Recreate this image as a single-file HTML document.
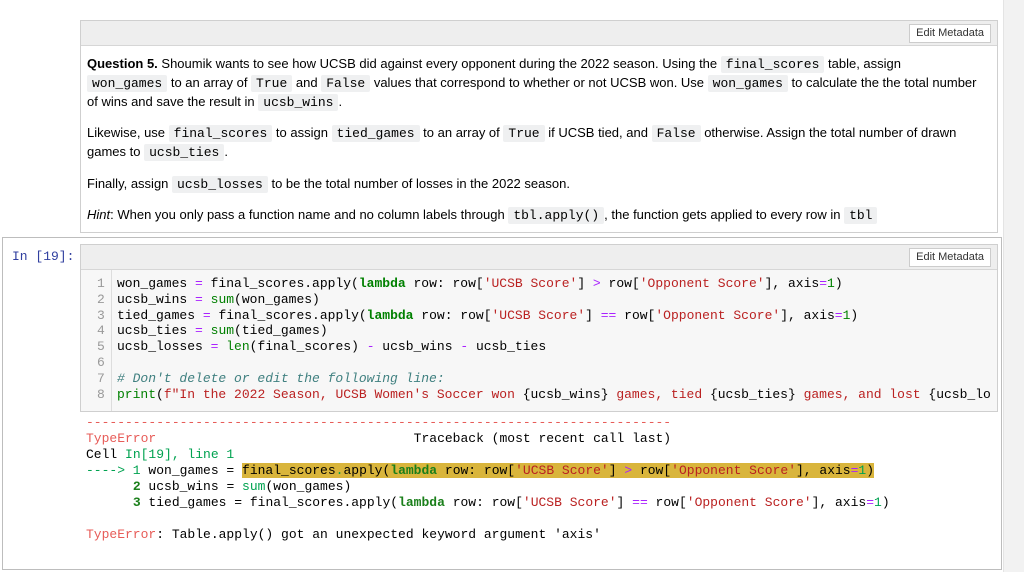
<!DOCTYPE html>
<html><head><style>
body{margin:0;width:1024px;height:572px;background:#fff;position:relative;overflow:hidden;font-family:"Liberation Sans",Arial,sans-serif;}
.sb{position:absolute;left:1003px;top:0;width:21px;height:572px;background:#f2f2f2;border-left:1px solid #e4e4e4;}
.box{position:absolute;border:1px solid #cfcfcf;background:#fff;}
.hdr{position:absolute;left:0;right:0;top:0;height:24px;background:#eeeeee;border-bottom:1px solid #d6d6d6;}
.btn{position:absolute;right:6px;top:3px;height:17px;padding:0 6px;background:#fff;border:1px solid #ccc;font-size:11px;line-height:17px;color:#333;}
.t{position:absolute;left:6px;font-size:13px;color:#000;white-space:nowrap;line-height:16px;}
code{font-family:"Liberation Mono",monospace;font-size:13px;background:#eff0f1;padding:1px 5px;border-radius:2px;}
.m{font-family:"Liberation Mono",monospace;font-size:13px;white-space:pre;position:absolute;line-height:15.8px;}
.k{color:#008000;font-weight:bold}.o{color:#aa22ff}.n{color:#008000}.s{color:#ba2121}.c{color:#408080;font-style:italic}
.ln{color:#999}
.r{color:#e75c58}.g{color:#00a250}.dg{color:#1a7f1a;font-weight:bold}
.hl{background:#d9b53c}
</style></head><body>
<div class="sb"></div>
<div class="box" style="left:80px;top:20px;width:916px;height:211px;">
  <div class="hdr"><div class="btn">Edit Metadata</div></div>
  <div class="t" style="top:35px"><b>Question 5.</b> Shoumik wants to see how UCSB did against every opponent during the 2022 season. Using the <code>final_scores</code> table, assign</div>
  <div class="t" style="top:54px"><code>won_games</code> to an array of <code>True</code> and <code>False</code> values that correspond to whether or not UCSB won. Use <code>won_games</code> to calculate the the total number</div>
  <div class="t" style="top:73px">of wins and save the result in <code>ucsb_wins</code>.</div>
  <div class="t" style="top:104px">Likewise, use <code>final_scores</code> to assign <code>tied_games</code> to an array of <code>True</code> if UCSB tied, and <code>False</code> otherwise. Assign the total number of drawn</div>
  <div class="t" style="top:123px">games to <code>ucsb_ties</code>.</div>
  <div class="t" style="top:155px">Finally, assign <code>ucsb_losses</code> to be the total number of losses in the 2022 season.</div>
  <div class="t" style="top:186px"><i>Hint</i>: When you only pass a function name and no column labels through <code>tbl.apply()</code>, the function gets applied to every row in <code>tbl</code></div>
</div>
<div class="box" style="left:2px;top:237px;width:998px;height:331px;border-color:#bdbdbd;background:transparent"></div>
<div class="m" style="left:12px;top:249px;color:#303f9f">In [19]:</div>
<div class="box" style="left:80px;top:244px;width:916px;height:166px;background:#f7f7f7;">
  <div class="hdr"><div class="btn">Edit Metadata</div></div>
  <div style="position:absolute;left:0;top:25px;width:30px;bottom:0;border-right:1px solid #ddd;"></div>
  <div class="m ln" style="left:16px;top:31px">1
2
3
4
5
6
7
8</div>
  <div class="m" style="left:36px;top:31px;width:878px;overflow:hidden">won_games <span class="o">=</span> final_scores.apply(<span class="k">lambda</span> row: row[<span class="s">'UCSB Score'</span>] <span class="o">&gt;</span> row[<span class="s">'Opponent Score'</span>], axis<span class="o">=</span><span class="n">1</span>)
ucsb_wins <span class="o">=</span> <span class="n">sum</span>(won_games)
tied_games <span class="o">=</span> final_scores.apply(<span class="k">lambda</span> row: row[<span class="s">'UCSB Score'</span>] <span class="o">==</span> row[<span class="s">'Opponent Score'</span>], axis<span class="o">=</span><span class="n">1</span>)
ucsb_ties <span class="o">=</span> <span class="n">sum</span>(tied_games)
ucsb_losses <span class="o">=</span> <span class="n">len</span>(final_scores) <span class="o">-</span> ucsb_wins <span class="o">-</span> ucsb_ties

<span class="c"># Don't delete or edit the following line:</span>
<span class="n">print</span>(<span class="s">f"In the 2022 Season, UCSB Women's Soccer won </span>{ucsb_wins}<span class="s"> games, tied </span>{ucsb_ties}<span class="s"> games, and lost </span>{ucsb_lo</div>
</div>
<div class="m" style="left:86px;top:415px;line-height:16px"><span class="r">---------------------------------------------------------------------------</span>
<span class="r">TypeError</span>                                 Traceback (most recent call last)
Cell <span class="g">In[19], line 1</span>
<span class="g">----&gt; 1</span> won_games = <span class="hl">final_scores<span class="g">.</span>apply(<span class="dg">lambda</span> row: row[<span class="s">'UCSB Score'</span>] <span class="o">&gt;</span> row[<span class="s">'Opponent Score'</span>], axis<span class="o">=</span><span class="g">1</span>)</span>
      <span class="dg">2</span> ucsb_wins = <span class="g">sum</span>(won_games)
      <span class="dg">3</span> tied_games = final_scores.apply(<span class="dg">lambda</span> row: row[<span class="s">'UCSB Score'</span>] <span class="o">==</span> row[<span class="s">'Opponent Score'</span>], axis<span class="o">=</span><span class="g">1</span>)

<span class="r">TypeError</span>: Table.apply() got an unexpected keyword argument 'axis'</div>
</body></html>
